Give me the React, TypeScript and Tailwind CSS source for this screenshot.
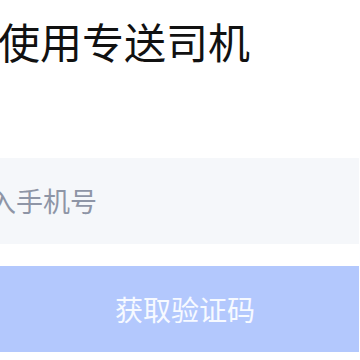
export default function App() {
  return (
    <div
      className="w-[360px] h-[360px] overflow-hidden bg-white"
      style={{ fontFamily: '"Noto Sans CJK SC", "Noto Sans", sans-serif' }}
    >
      <div className="ml-[-2px] mr-[1px] flex flex-col">
        {/* Title */}
        <h1 className="pt-[18px] h-[158px] text-[42px] leading-[46px] font-normal text-[#111111]">
          使用专送司机
        </h1>

        {/* Phone input */}
        <div className="h-[86px] bg-[#f5f7fa] overflow-hidden flex items-center">
          <input
            type="tel"
            placeholder="请输入手机号"
            className="ml-[-63px] w-[calc(100%+63px)] bg-transparent outline-none text-[27px] text-[#333] placeholder:text-[#8e95a6]"
          />
        </div>

        {/* Button */}
        <button
          disabled
          className="mt-[22px] h-[86px] bg-[#b3c8fd] flex items-center justify-center pl-[13px] text-[28px] text-white/90"
        >
          获取验证码
        </button>
      </div>
    </div>
  )
}
